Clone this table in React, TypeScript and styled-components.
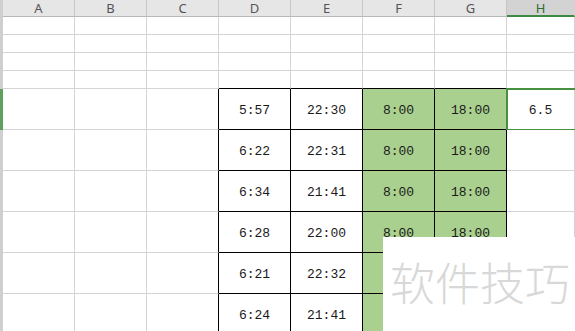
import React from 'react'
import styled, { createGlobalStyle } from 'styled-components'

const GlobalStyle = createGlobalStyle`
    html, body {
        margin:0;
        padding:0;
        background:#fff;
        overflow:hidden;
    }
`

const columns = ['A', 'B', 'C', 'D', 'E', 'F', 'G', 'H']

const rows = [
    ['5:57', '22:30', '8:00', '18:00', '6.5'],
    ['6:22', '22:31', '8:00', '18:00', ''],
    ['6:34', '21:41', '8:00', '18:00', ''],
    ['6:28', '22:00', '8:00', '18:00', ''],
    ['6:21', '22:32', '8:00', '18:00', ''],
    ['6:24', '21:41', '8:00', '18:00', ''],
]

export default function App() {
    return (
        <>
            <GlobalStyle />
            <Sheet>
                <Grid>
                    <RowHead $h={17} />
                    {columns.map((c) => (
                        <ColHead key={c} $active={c === 'H'}>{c}</ColHead>
                    ))}

                    {[0, 1, 2, 3].map((r) =>
                        <React.Fragment key={'e' + r}>
                            <RowHead $h={18} />
                            {columns.map((c, i) => (
                                <Cell key={c} $h={18} $darkBottom={r === 3 && i >= 3 && i <= 6} />
                            ))}
                        </React.Fragment>
                    )}

                    {rows.map((row, r) =>
                        <React.Fragment key={'d' + r}>
                            <RowHead $h={41} $active={r === 0} />
                            <Cell $h={41} />
                            <Cell $h={41} />
                            <Cell $h={41} $darkRight />
                            <Cell $h={41} $darkRight $darkBottom>{row[0]}</Cell>
                            <Cell $h={41} $darkRight $darkBottom>{row[1]}</Cell>
                            <Cell $h={41} $darkRight $darkBottom $fill>{row[2]}</Cell>
                            <Cell $h={41} $darkRight $darkBottom $fill>{row[3]}</Cell>
                            <Cell $h={41}>
                                {row[4]}
                                {r === 0 && <Selection />}
                            </Cell>
                        </React.Fragment>
                    )}
                </Grid>
                <Watermark>软件技巧</Watermark>
            </Sheet>
        </>
    )
}

const Sheet = styled.div`
    position:relative;
    width:575px;
    height:331px;
    overflow:hidden;
    background:#fff;
`

const Grid = styled.div`
    display:grid;
    grid-template-columns:3px repeat(7, 72px) 1fr;
`

const RowHead = styled.div<{ $h: number, $active?: boolean }>`
    height:${p => p.$h}px;
    background:${p => p.$active ? '#5fa05f' : '#cfcfcf'};
`

const ColHead = styled.div<{ $active?: boolean }>`
    box-sizing:border-box;
    height:17px;
    display:flex;
    align-items:center;
    justify-content:center;
    font-family:'Noto Sans', 'Liberation Sans', sans-serif;
    font-size:13px;
    color:${p => p.$active ? '#2f6b32' : '#555'};
    background:${p => p.$active ? '#d3d3d3' : '#e6e6e6'};
    border-right:1px solid ${p => p.$active ? '#d3d3d3' : '#c6c6c6'};
    border-bottom:${p => p.$active ? '2px solid #3f8a43' : '1px solid #b8b8b8'};
`

const Cell = styled.div<{ $h: number, $darkRight?: boolean, $darkBottom?: boolean, $fill?: boolean }>`
    position:relative;
    box-sizing:border-box;
    height:${p => p.$h}px;
    display:flex;
    align-items:center;
    justify-content:center;
    padding-top:3px;
    font-family:'Liberation Mono', 'DejaVu Sans Mono', monospace;
    font-size:13px;
    color:#1a1a1a;
    background:${p => p.$fill ? '#a9d08e' : '#fff'};
    border-right:1px solid ${p => p.$darkRight ? '#000' : '#d4d4d4'};
    border-bottom:1px solid ${p => p.$darkBottom ? '#000' : '#d4d4d4'};
`

const Selection = styled.div`
    position:absolute;
    left:-1px;
    top:-1px;
    right:-2px;
    bottom:-2px;
    border:2px solid #46913f;
    border-right:none;
`

const Watermark = styled.div`
    position:absolute;
    left:383px;
    top:237px;
    right:0;
    bottom:0;
    background:#fff;
    display:flex;
    justify-content:center;
    padding-top:18px;
    padding-left:2px;
    box-sizing:border-box;
    font-family:'Noto Sans CJK SC', sans-serif;
    font-weight:300;
    font-size:45px;
    line-height:1.2;
    color:#d8d8d8;
`
